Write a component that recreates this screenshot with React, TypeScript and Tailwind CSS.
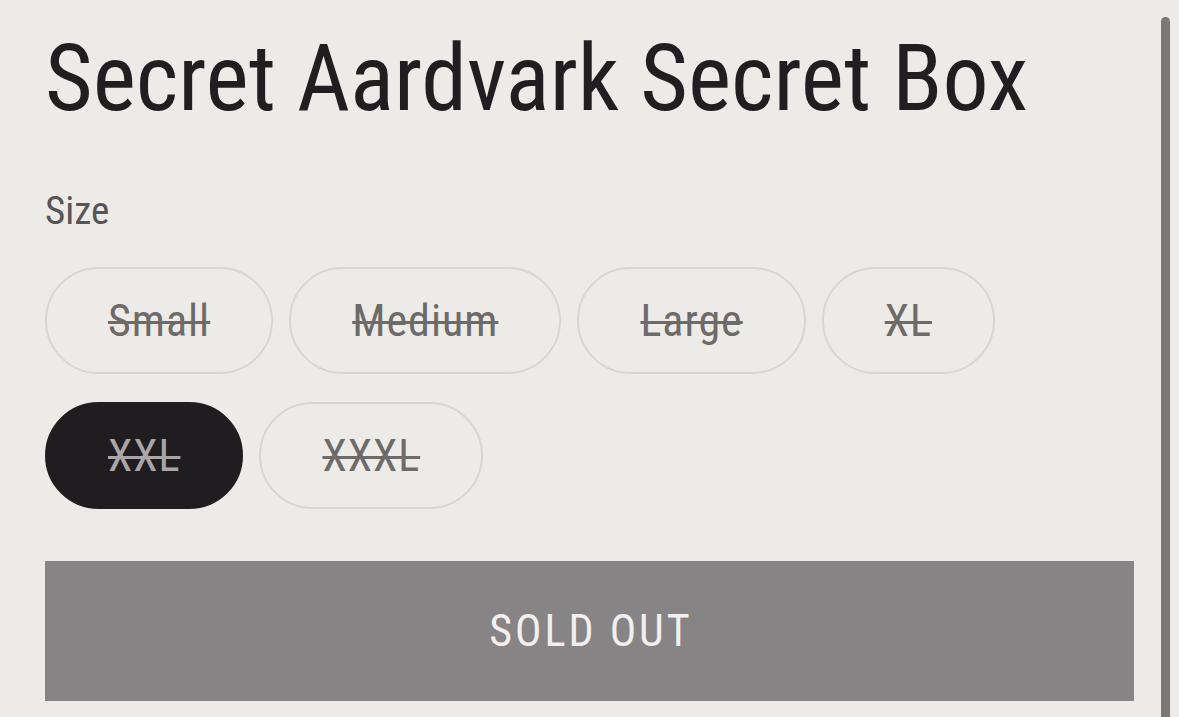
const sizes = [
  { label: 'Small', selected: false },
  { label: 'Medium', selected: false },
  { label: 'Large', selected: false },
  { label: 'XL', selected: false },
  { label: 'XXL', selected: true },
  { label: 'XXXL', selected: false },
];

function SizePill({ label, selected }: { label: string; selected: boolean }) {
  return (
    <label
      className={
        selected
          ? 'flex h-[107px] items-center rounded-full border-2 border-[#201d20] bg-[#201d20] px-[61px] text-[44px] leading-none tracking-[1px] text-[#a9a6a7] line-through decoration-[3px]'
          : 'flex h-[107px] items-center rounded-full border-2 border-[#d9d6d2] px-[61px] text-[44px] leading-none tracking-[1px] text-[#6d6b6a] line-through decoration-[3px]'
      }
    >
      {label}
    </label>
  );
}

export default function App() {
  return (
    <div className="relative min-h-[717px] w-full overflow-hidden bg-[#edebe7] font-['Roboto_Condensed',_'Roboto',_sans-serif]">
      <div className="px-[45px] pt-[33px]">
        <h1 className="whitespace-nowrap text-[92px] leading-none text-[#211e22]">Secret Aardvark Secret Box</h1>

        <fieldset className="mt-[67px]">
          <legend className="text-[39px] leading-none text-[#575556]">Size</legend>
          <div className="mt-[36px] flex flex-wrap gap-x-4 gap-y-[28px]">
            {sizes.map((s) => (
              <SizePill key={s.label} label={s.label} selected={s.selected} />
            ))}
          </div>
        </fieldset>

        <button
          disabled
          className="mt-[52px] flex h-[140px] w-full items-center justify-center bg-[#868485] pl-[3px] text-[44px] uppercase leading-none tracking-[3px] text-[#f2f0ee]"
        >
          Sold out
        </button>
      </div>

      <div className="absolute bottom-0 right-[9px] top-[17px] w-[9px] rounded-t-full bg-[#7a7977]" />
    </div>
  );
}
